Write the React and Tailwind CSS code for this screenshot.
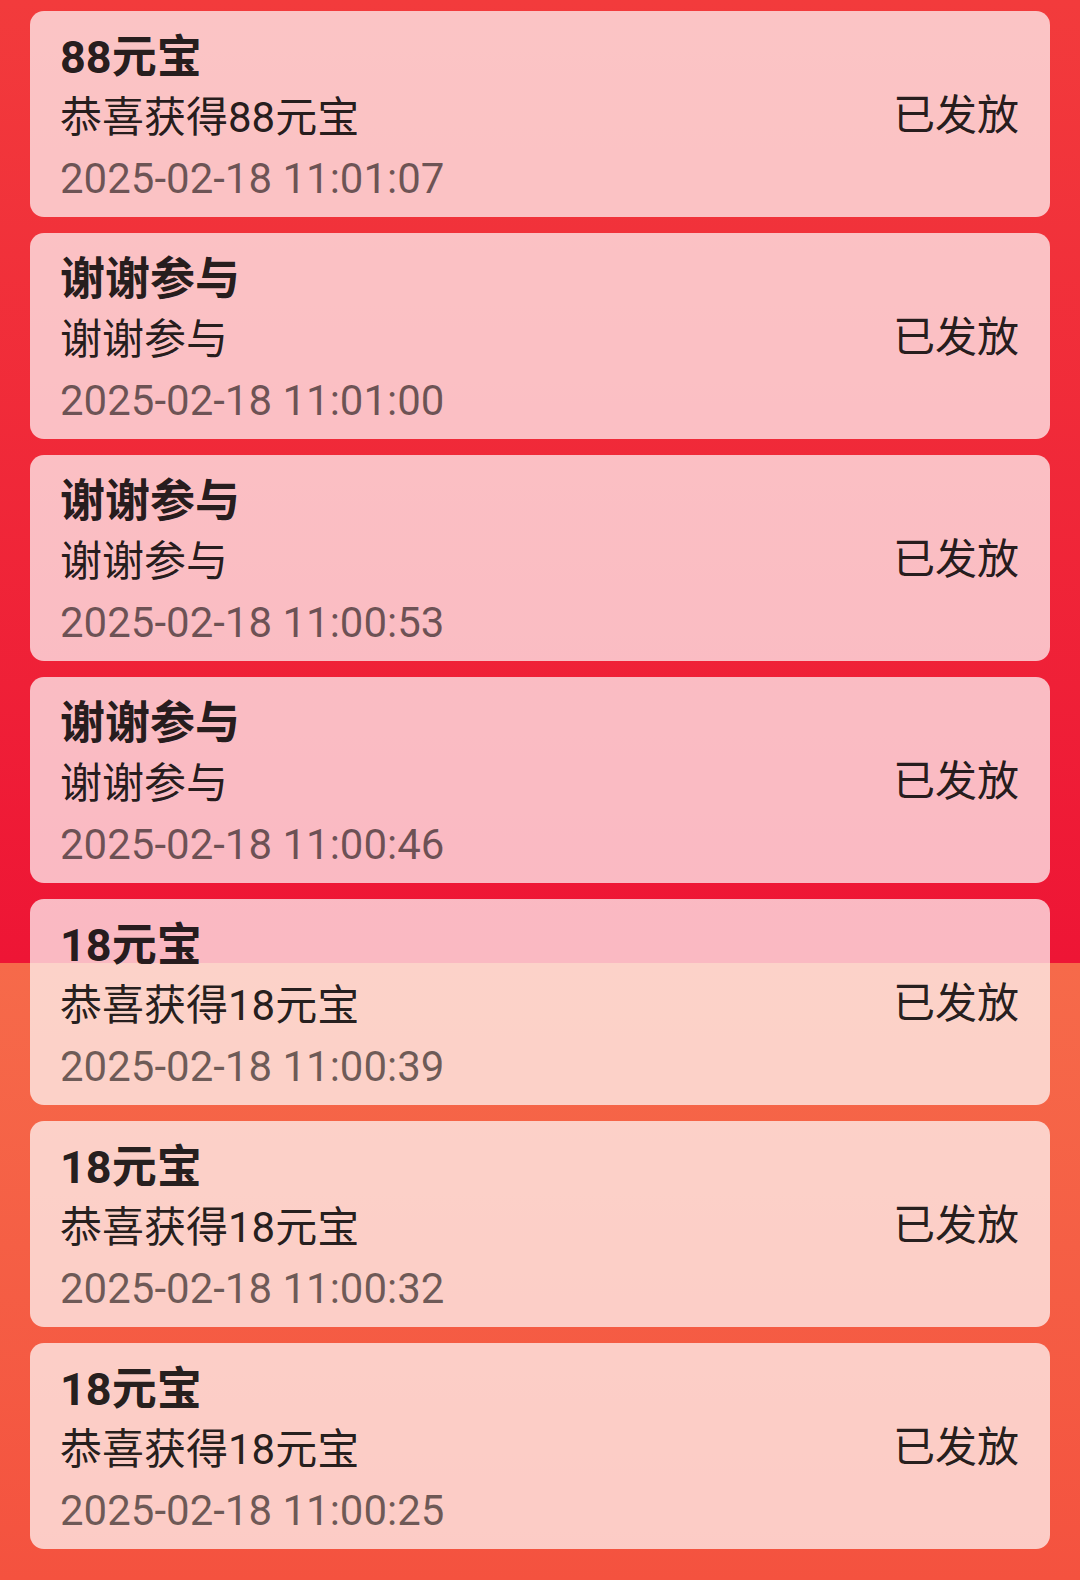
const records = [
  { title: '88元宝', desc: '恭喜获得88元宝', time: '2025-02-18 11:01:07' },
  { title: '谢谢参与', desc: '谢谢参与', time: '2025-02-18 11:01:00' },
  { title: '谢谢参与', desc: '谢谢参与', time: '2025-02-18 11:00:53' },
  { title: '谢谢参与', desc: '谢谢参与', time: '2025-02-18 11:00:46' },
  { title: '18元宝', desc: '恭喜获得18元宝', time: '2025-02-18 11:00:39' },
  { title: '18元宝', desc: '恭喜获得18元宝', time: '2025-02-18 11:00:32' },
  { title: '18元宝', desc: '恭喜获得18元宝', time: '2025-02-18 11:00:25' },
];

const RecordCard = ({ item }) => (
  <div className="flex h-[206px] items-center justify-between rounded-[14px] bg-white/70 pl-[30px] pr-[31px]">
    <div className="flex flex-col pt-[6px] leading-[61px]">
      <div className="pt-[2px] text-[45px] leading-[59px] font-bold text-black/[0.87]">{item.title}</div>
      <div className="text-[42px] text-black/[0.87]">{item.desc}</div>
      <div className="text-[42px] text-black/[0.57]">{item.time}</div>
    </div>
    <div className="pt-[2px] text-[42px] text-black/[0.87]">已发放</div>
  </div>
);

const App = () => {
  return (
    <div
      className="min-h-[1580px] w-[1080px] bg-[linear-gradient(to_bottom,#f23b3c_0px,#ee1535_963px,#f66a4a_963px,#f4523f_1580px)] px-[30px] pt-[11px] pb-[31px]"
      style={{ fontFamily: 'Roboto, "Noto Sans CJK SC", sans-serif' }}
    >
      <div className="flex flex-col gap-[16px]">
        {records.map((item, i) => (
          <RecordCard key={i} item={item} />
        ))}
      </div>
    </div>
  );
};

export default App;
